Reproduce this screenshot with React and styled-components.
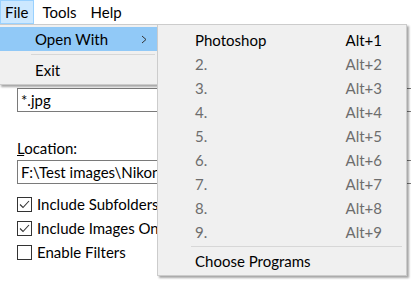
import React from "react";
import styled, { createGlobalStyle } from "styled-components";

const GlobalStyle = createGlobalStyle`
  body {
    margin: 0;
    background: #fff;
    font-family: Lato, "Liberation Sans", sans-serif;
    font-size: 15px;
    color: #000;
  }
`;

const Window = styled.div`
  position: relative;
  width: 411px;
  height: 284px;
  overflow: hidden;
  background: #fff;
`;

const MenuBar = styled.div`
  display: flex;
  gap: 4px;
  height: 24px;
  background: #fff;
`;

const MenuTitle = styled.div`
  display: flex;
  align-items: center;
  padding: 0 4px;
  border: 1px solid ${(p) => (p.active ? "#99d1ff" : "transparent")};
  background: ${(p) => (p.active ? "#cce8ff" : "transparent")};
  line-height: 1;
`;

const Body = styled.div`
  display: flex;
  flex-direction: column;
  padding: 64px 0 0 17px;
`;

const TextBox = styled.div`
  box-sizing: border-box;
  width: 420px;
  height: 24px;
  margin-top: ${(p) => p.gap || 0}px;
  border: 1px solid #7a7a7a;
  padding-left: 3px;
  display: flex;
  align-items: center;
  white-space: nowrap;
  overflow: hidden;
`;

const Label = styled.div`
  margin-top: 28px;
  height: 16px;
  line-height: 16px;
  u {
    text-decoration: underline;
    text-underline-offset: 1px;
  }
`;

const Checks = styled.div`
  display: flex;
  flex-direction: column;
  margin-top: 8px;
`;

const CheckRow = styled.div`
  display: flex;
  align-items: center;
  gap: 5px;
  height: 24px;
  white-space: nowrap;
`;

const Box = styled.span`
  box-sizing: border-box;
  width: 15px;
  height: 15px;
  border: 1px solid #333;
  background: #fff;
  display: flex;
  align-items: center;
  justify-content: center;
`;

const Dropdown = styled.div`
  position: absolute;
  left: -1px;
  top: 24px;
  width: 157px;
  padding: 2px 0;
  background: #f0f0f0;
  border: 1px solid #cccccc;
  box-shadow: 2px 2px 2px rgba(0, 0, 0, 0.35);
`;

const SubMenu = styled.div`
  position: absolute;
  left: 157px;
  top: 24px;
  width: 248px;
  padding: 3px 0 2px;
  background: #f0f0f0;
  border: 1px solid #cccccc;
  box-shadow: 2px 2px 2px rgba(0, 0, 0, 0.35);
`;

const Item = styled.div`
  display: grid;
  grid-template-columns: 1fr auto;
  align-items: center;
  height: 24px;
  padding: ${(p) => (p.sub ? "0 24px 0 37px" : "0 10px 0 35px")};
  background: ${(p) => (p.highlight ? "#91c9f7" : "transparent")};
  color: ${(p) => (p.disabled ? "#6d6d6d" : "#000")};
  white-space: nowrap;
`;

const Separator = styled.div`
  height: 1px;
  margin: ${(p) => (p.sub ? "2px 4px 2px 33px" : "3px 2px 3px 31px")};
  background: #d7d7d7;
`;

const Check = () => (
  <svg width="11" height="9" viewBox="0 0 11 9">
    <polyline points="1,4.5 4,7.5 10,1" fill="none" stroke="#333" strokeWidth="1.1" />
  </svg>
);

const Chevron = () => (
  <svg width="6" height="9" viewBox="0 0 6 9">
    <polyline points="1,1 5,4.5 1,8" fill="none" stroke="#333" strokeWidth="1" />
  </svg>
);

const shortcuts = [2, 3, 4, 5, 6, 7, 8, 9];

export default function App() {
  return (
    <Window>
      <GlobalStyle />
      <MenuBar>
        <MenuTitle active>File</MenuTitle>
        <MenuTitle>Tools</MenuTitle>
        <MenuTitle>Help</MenuTitle>
      </MenuBar>
      <Body>
        <TextBox>*.jpg</TextBox>
        <Label>
          <u>L</u>ocation:
        </Label>
        <TextBox gap={4}>F:\Test images\Nikon D</TextBox>
        <Checks>
          <CheckRow>
            <Box><Check /></Box>Include Subfolders
          </CheckRow>
          <CheckRow>
            <Box><Check /></Box>Include Images Only
          </CheckRow>
          <CheckRow>
            <Box />Enable Filters
          </CheckRow>
        </Checks>
      </Body>
      <Dropdown>
        <Item highlight>
          <span>Open With</span>
          <Chevron />
        </Item>
        <Separator />
        <Item>
          <span>Exit</span>
        </Item>
      </Dropdown>
      <SubMenu>
        <Item sub>
          <span>Photoshop</span>
          <span>Alt+1</span>
        </Item>
        {shortcuts.map((n) => (
          <Item sub disabled key={n}>
            <span>{n}.</span>
            <span>Alt+{n}</span>
          </Item>
        ))}
        <Separator sub />
        <Item sub>
          <span>Choose Programs</span>
        </Item>
      </SubMenu>
    </Window>
  );
}
